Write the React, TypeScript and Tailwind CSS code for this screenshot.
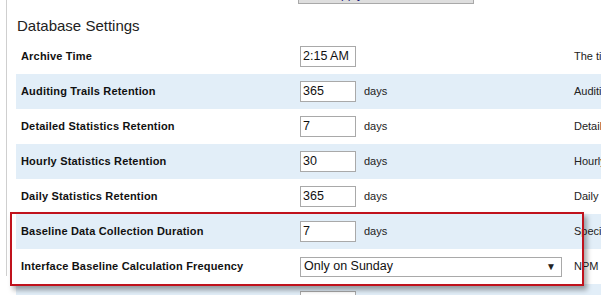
import React from "react";

const rows: { label: string; value: string; days: boolean; desc: string; select?: boolean }[] = [
  { label: "Archive Time", value: "2:15 AM", days: false, desc: "The time of day when database archive begins" },
  { label: "Auditing Trails Retention", value: "365", days: true, desc: "Auditing trails older than this are deleted" },
  { label: "Detailed Statistics Retention", value: "7", days: true, desc: "Detailed statistics older than this are summarized" },
  { label: "Hourly Statistics Retention", value: "30", days: true, desc: "Hourly statistics older than this are summarized" },
  { label: "Daily Statistics Retention", value: "365", days: true, desc: "Daily statistics older than this are deleted" },
  { label: "Baseline Data Collection Duration", value: "7", days: true, desc: "Specifies the number of days of data" },
  { label: "Interface Baseline Calculation Frequency", value: "Only on Sunday", days: false, desc: "NPM calculates baselines", select: true },
];

export default function App() {
  return (
    <div
      className="relative w-[601px] h-[295px] overflow-hidden bg-white text-[#111]"
      style={{ fontFamily: '"Liberation Sans", Arial, sans-serif' }}
    >
      <div className="ml-[6px] h-full border-l border-[#cfcfcf] pl-[9px]">
        <div className="ml-[282px] -mt-[19px] h-[23px] w-[176px] border border-[#a9a9a9] bg-[#dedede] pl-[34px] pt-[4px] text-[12px] text-[#1a1a80] leading-[16px]">
          Apply
        </div>
        <div className="mt-[12px] h-[20px] pl-[1px] text-[15px] leading-[20px] text-[#222]">Database Settings</div>
        <div className="mt-[3px]">
          {rows.concat([{ label: "", value: "", days: false, desc: "" }]).map((r, i) => (
            <div
              key={i}
              className={`flex h-[35px] items-center overflow-hidden ${i % 2 === 1 ? "bg-[#e2eef8]" : "bg-white"}`}
            >
              <div className="w-[284px] shrink-0 pl-[5px] text-[11px] font-bold tracking-[0.18px] text-[#111]">{r.label}</div>
              {r.select ? (
                <div className="flex h-[20px] w-[262px] shrink-0 items-center justify-between border border-[#a9a9a9] bg-white pl-[3px] pr-[5px] text-[12.5px] text-[#111]">
                  <span>{r.value}</span>
                  <span className="text-[10px] text-[#222]">▼</span>
                </div>
              ) : (
                <div className="flex h-[21px] w-[56px] shrink-0 items-center whitespace-nowrap border border-[#a9a9a9] bg-white pl-[2px] text-[12.5px] text-[#111]">
                  {r.value}
                </div>
              )}
              {!r.select && (
                <div className="ml-[8px] w-[210px] shrink-0 text-[11px] text-[#222]">{r.days ? "days" : ""}</div>
              )}
              {r.select && <div className="w-[12px] shrink-0" />}
              <div className="shrink-0 whitespace-nowrap text-[11px] text-[#222]">{r.desc}</div>
            </div>
          ))}
        </div>
      </div>
      <div className="pointer-events-none absolute left-[10px] top-[212px] h-[74px] w-[574px] border-2 border-[#c0121c] shadow-[3px_4px_5px_rgba(0,0,0,0.35)]" />
    </div>
  );
}
